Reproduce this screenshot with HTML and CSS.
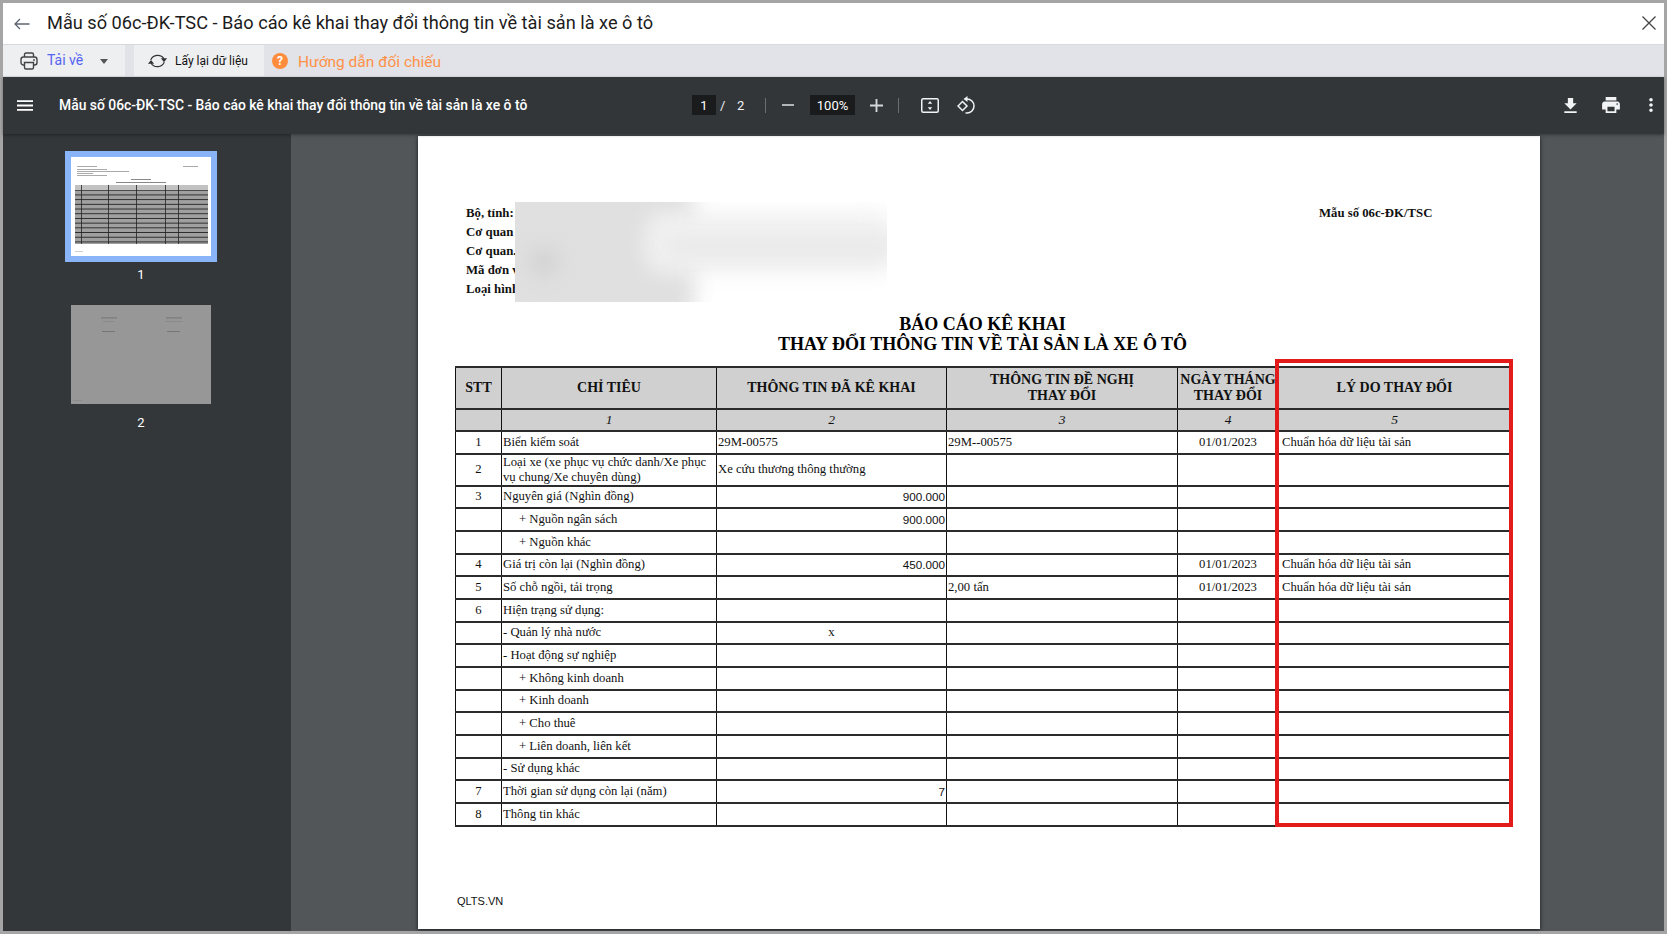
FILE: index.html
```
<!DOCTYPE html>
<html lang="vi">
<head>
<meta charset="utf-8">
<title>Mẫu số 06c-ĐK-TSC</title>
<link rel="stylesheet" href="styles.css">
</head>
<body>
<div class="frame">
  <header class="titlebar">
    <svg class="ic-back" viewBox="0 0 16 12"><path d="M15.5 6H1.2M6 1L1 6l5 5" fill="none" stroke="#5d6673" stroke-width="1.3"/></svg>
    <h1 class="doc-title">Mẫu số 06c-ĐK-TSC - Báo cáo kê khai thay đổi thông tin về tài sản là xe ô tô</h1>
    <svg class="ic-close" viewBox="0 0 14 14"><path d="M.5.5l13 13M13.5.5l-13 13" fill="none" stroke="#444" stroke-width="1.3"/></svg>
  </header>
  <div class="actions">
    <div class="btn btn-download">
      <svg class="ic-printer" viewBox="0 0 18 18"><g fill="none" stroke="#444" stroke-width="1.4"><path d="M4.5 5V2.5q0-1.5 1.5-1.5h6q1.500 0 1.500 1.500V5"/><rect x="1" y="5" width="16" height="8" rx="2.500"/><path d="M4.500 10.500h9v5q0 1.500-1.500 1.500H6q-1.500 0-1.500-1.500z" fill="#eeeff1"/></g><circle cx="14" cy="8" r=".9" fill="#444"/></svg>
      <span class="btn-label">Tải về</span>
      <span class="caret"></span>
    </div>
    <div class="btn btn-refresh">
      <svg class="ic-refresh" viewBox="0 0 18 16"><g fill="none" stroke="#333" stroke-width="1.1"><path d="M3 7A6.500 6 0 0 1 14.750 6"/><path d="M15 9A6.500 6 0 0 1 3.250 10"/></g><path d="M12 5.500h5.500L14.750 9zM.5 10.500H6L3.250 7z" fill="#333"/></svg>
      <span class="btn-text">Lấy lại dữ liệu</span>
    </div>
    <span class="help-dot">?</span>
    <span class="help-text">Hướng dẫn đối chiếu</span>
  </div>
  <div class="pdfbar">
    <svg class="ic-menu" viewBox="3 6 18 12"><path d="M3 18h18v-2H3v2zm0-5h18v-2H3v2zm0-7v2h18V6H3z" fill="#fff"/></svg>
    <span class="pdf-title">Mẫu số 06c-ĐK-TSC - Báo cáo kê khai thay đổi thông tin về tài sản là xe ô tô</span>
    <span class="field field-page">1</span>
    <span class="slash">/</span>
    <span class="total">2</span>
    <span class="sep sep-a"></span>
    <svg class="ic-minus" viewBox="5 11 14 2"><path d="M19 13H5v-2h14v2z" fill="#c9cbcd"/></svg>
    <span class="field field-zoom">100%</span>
    <svg class="ic-plus" viewBox="5 5 14 14"><path d="M19 13h-6v6h-2v-6H5v-2h6V5h2v6h6v2z" fill="#d5d7d9"/></svg>
    <span class="sep sep-b"></span>
    <svg class="ic-fit" viewBox="0 0 18 15"><rect x=".75" y=".75" width="16.500" height="13.500" rx="1.500" fill="none" stroke="#f1f3f4" stroke-width="1.500"/><path d="M9 3l2.200 2.800H6.800zM9 12l2.200-2.800H6.800z" fill="#f1f3f4"/></svg>
    <svg class="ic-rotate" viewBox="0 0 18 18"><g fill="none" stroke="#f1f3f4" stroke-width="1.500"><path d="M5.500 5.500L10 10 5.500 14.500 1 10z"/><path d="M9 3h1a7 7 0 0 1 0 14H8.500"/></g><path d="M10.500 0v6L6.500 3z" fill="#f1f3f4"/></svg>
    <span class="bar-spring"></span>
    <svg class="ic-dl" viewBox="5 3 14 17"><path d="M19 9h-4V3H9v6H5l7 7 7-7zM5 18v2h14v-2H5z" fill="#f1f3f4"/></svg>
    <svg class="ic-print" viewBox="2 3 20 18"><path d="M19 8H5c-1.660 0-3 1.340-3 3v6h4v4h12v-4h4v-6c0-1.660-1.340-3-3-3zm-3 11H8v-5h8v5zm3-7c-.55 0-1-.45-1-1s.45-1 1-1 1 .45 1 1-.45 1-1 1zm-1-9H6v4h12V3z" fill="#f1f3f4"/></svg>
    <svg class="ic-more" viewBox="10 4 4 16"><path d="M12 8c1.100 0 2-.9 2-2s-.9-2-2-2-2 .9-2 2 .9 2 2 2zm0 2c-1.100 0-2 .9-2 2s.9 2 2 2 2-.9 2-2-.9-2-2-2zm0 6c-1.100 0-2 .9-2 2s.9 2 2 2 2-.9 2-2-.9-2-2-2z" fill="#f1f3f4"/></svg>
  </div>
  <div class="workspace">
    <aside class="sidebar">
      <div class="thumb thumb-active">
        <svg class="thumb-page" viewBox="0 0 140 99">
          <defs><pattern id="stripes" width="140" height="4.700" patternUnits="userSpaceOnUse" y="29"><rect width="140" height="3.700" fill="#a0a0a0"/><rect y="3.700" width="140" height="1" fill="#2a2a2a"/></pattern></defs>
          <rect width="140" height="99" fill="#fff"/>
          <g fill="#aaa"><rect x="6" y="9" width="20" height="1"/><rect x="112" y="9" width="15" height="1"/><rect x="6" y="12" width="30" height="1"/><rect x="6" y="14" width="52" height="1"/><rect x="6" y="16" width="16" height="1"/><rect x="6" y="18" width="30" height="1"/><rect x="60" y="22" width="20" height="1" fill="#888"/><rect x="45" y="25" width="50" height="1" fill="#888"/></g>
          <rect x="4" y="28" width="133" height="59" fill="url(#stripes)"/>
          <rect x="4" y="28" width="133" height="5" fill="#c2c2c2"/>
          <g fill="#222"><rect x="10" y="28" width=".8" height="59"/><rect x="37" y="28" width=".8" height="59"/><rect x="65" y="28" width=".8" height="59"/><rect x="94" y="28" width=".8" height="59"/><rect x="107" y="28" width=".8" height="59"/></g>
          <rect x="4" y="94" width="8" height=".7" fill="#bbb"/>
        </svg>
      </div>
      <div class="thumb-num">1</div>
      <div class="thumb">
        <svg class="thumb-page" viewBox="0 0 140 99">
          <rect width="140" height="99" fill="#979797"/>
          <g fill="#6f6f6f"><rect x="30" y="12.500" width="16" height=".8"/><rect x="95" y="12.500" width="16" height=".8"/><rect x="32" y="16" width="11" height=".7" fill="#858585"/><rect x="94" y="16" width="18" height=".7" fill="#858585"/><rect x="31" y="26" width="13" height=".8"/><rect x="96" y="26" width="13" height=".8"/><rect x="2" y="95" width="9" height=".6" fill="#858585"/></g>
        </svg>
      </div>
      <div class="thumb-num">2</div>
    </aside>
    <main class="viewer">
      <article class="page">
        <div class="doc-head">
          <div class="org">
            <div>Bộ, tỉnh:</div>
            <div>Cơ quan</div>
            <div>Cơ quan.</div>
            <div>Mã đơn vị</div>
            <div>Loại hình</div>
          </div>
          <div class="form-no">Mẫu số 06c-ĐK/TSC</div>
        </div>
        <h2 class="report-title">BÁO CÁO KÊ KHAI<br>THAY ĐỔI THÔNG TIN VỀ TÀI SẢN LÀ XE Ô TÔ</h2>
        <table class="report">
          <colgroup><col class="c1"><col class="c2"><col class="c3"><col class="c4"><col class="c5"><col class="c6"></colgroup>
          <thead>
            <tr class="r-head"><th>STT</th><th>CHỈ TIÊU</th><th>THÔNG TIN ĐÃ KÊ KHAI</th><th>THÔNG TIN ĐỀ NGHỊ<br>THAY ĐỔI</th><th>NGÀY THÁNG<br>THAY ĐỔI</th><th>LÝ DO THAY ĐỔI</th></tr>
            <tr class="r-sub"><th></th><th>1</th><th>2</th><th>3</th><th>4</th><th>5</th></tr>
          </thead>
          <tbody>
            <tr class="r"><td class="ctr">1</td><td>Biển kiểm soát</td><td>29M-00575</td><td>29M--00575</td><td class="ctr">01/01/2023</td><td class="why">Chuẩn hóa dữ liệu tài sản</td></tr>
            <tr class="r-tall"><td class="ctr">2</td><td class="tight">Loại xe (xe phục vụ chức danh/Xe phục vụ chung/Xe chuyên dùng)</td><td>Xe cứu thương thông thường</td><td></td><td></td><td></td></tr>
            <tr class="r"><td class="ctr">3</td><td>Nguyên giá (Nghìn đồng)</td><td class="num">900.000</td><td></td><td></td><td></td></tr>
            <tr class="r"><td></td><td class="ind">+ Nguồn ngân sách</td><td class="num">900.000</td><td></td><td></td><td></td></tr>
            <tr class="r"><td></td><td class="ind">+ Nguồn khác</td><td></td><td></td><td></td><td></td></tr>
            <tr class="r"><td class="ctr">4</td><td>Giá trị còn lại (Nghìn đồng)</td><td class="num">450.000</td><td></td><td class="ctr">01/01/2023</td><td class="why">Chuẩn hóa dữ liệu tài sản</td></tr>
            <tr class="r"><td class="ctr">5</td><td>Số chỗ ngồi, tải trọng</td><td></td><td>2,00 tấn</td><td class="ctr">01/01/2023</td><td class="why">Chuẩn hóa dữ liệu tài sản</td></tr>
            <tr class="r"><td class="ctr">6</td><td>Hiện trạng sử dụng:</td><td></td><td></td><td></td><td></td></tr>
            <tr class="r"><td></td><td>- Quản lý nhà nước</td><td class="ctr">x</td><td></td><td></td><td></td></tr>
            <tr class="r"><td></td><td>- Hoạt động sự nghiệp</td><td></td><td></td><td></td><td></td></tr>
            <tr class="r"><td></td><td class="ind">+ Không kinh doanh</td><td></td><td></td><td></td><td></td></tr>
            <tr class="r"><td></td><td class="ind">+ Kinh doanh</td><td></td><td></td><td></td><td></td></tr>
            <tr class="r"><td></td><td class="ind">+ Cho thuê</td><td></td><td></td><td></td><td></td></tr>
            <tr class="r"><td></td><td class="ind">+ Liên doanh, liên kết</td><td></td><td></td><td></td><td></td></tr>
            <tr class="r"><td></td><td>- Sử dụng khác</td><td></td><td></td><td></td><td></td></tr>
            <tr class="r"><td class="ctr">7</td><td>Thời gian sử dụng còn lại (năm)</td><td class="num">7</td><td></td><td></td><td></td></tr>
            <tr class="r"><td class="ctr">8</td><td>Thông tin khác</td><td></td><td></td><td></td><td></td></tr>
          </tbody>
        </table>
        <div class="page-foot">QLTS.VN</div>
        <div class="redact"><i class="b1"></i><i class="b2"></i><i class="b3"></i><i class="b4"></i></div>
        <div class="highlight"></div>
      </article>
    </main>
  </div>
</div>
</body>
</html>
```
FILE: styles.css
```
* { box-sizing: border-box; }
html, body { margin: 0; height: 100%; }
body { background: #a5a5a5; overflow: hidden; font-family: Roboto, "Liberation Sans", sans-serif; }
svg { display: block; flex: none; }

.frame { width: 1667px; height: 934px; padding: 3px; display: flex; flex-direction: column; }

.titlebar { height: 42px; flex: none; background: #fff; border-bottom: 1px solid #d8d9db; display: flex; align-items: center; }
.ic-back { width: 16px; height: 12px; margin-left: 11px; }
.doc-title { margin: -3px 0 0 17px; font-size: 18.200px; font-weight: 400; color: #1c1c1c; white-space: nowrap; flex: 1; }
.ic-close { width: 14px; height: 14px; margin-right: 8px; margin-top: -2px; }

.actions { height: 32px; flex: none; background: #e1e3e8; display: flex; align-items: center; }
.btn { height: 31px; align-self: flex-start; background: #eeeff1; display: flex; align-items: center; }
.btn-download { width: 122px; }
.btn-refresh { width: 130px; margin-left: 9px; }
.ic-printer { width: 18px; height: 18px; margin-left: 17px; }
.btn-label { margin-left: 9px; margin-top: -2px; font-size: 14px; color: #5463f2; }
.caret { margin-left: 17px; margin-top: 2px; border: 4px solid transparent; border-top: 5px solid #555; border-bottom: 0; }
.ic-refresh { width: 21px; height: 18px; margin-left: 13px; margin-top: 1px; }
.btn-text { margin-left: 7px; font-size: 12px; color: #111; white-space: nowrap; }
.help-dot { width: 16px; height: 16px; margin-left: 8px; margin-top: -1px; border-radius: 50%; background: #ff8c3c; color: #fff; font-size: 12px; font-weight: 700; line-height: 16px; text-align: center; }
.help-text { margin-left: 10px; margin-top: 1px; font-size: 15.500px; color: #ff9148; }

.pdfbar { height: 57px; flex: none; background: #323639; color: #f1f3f4; display: flex; align-items: center; position: relative; z-index: 1; box-shadow: 0 1px 3px rgba(0,0,0,.35); padding-bottom: 1px; }
.ic-menu { width: 16px; height: 11px; margin-left: 14px; }
.pdf-title { margin-left: 26px; width: 633px; font-size: 13.900px; font-weight: 500; color: #fff; white-space: nowrap; }
.field { height: 20px; background: #191b1c; color: #fff; font-size: 13px; line-height: 21px; text-align: center; }
.field-page { width: 24px; }
.slash { margin-left: 4px; width: 17px; font-size: 13px; }
.total { width: 28px; font-size: 13px; }
.sep { width: 1px; height: 15px; background: #6b6f72; }
.ic-minus { width: 12px; height: 2px; margin-left: 16px; }
.field-zoom { width: 45px; margin-left: 16px; }
.ic-plus { width: 13px; height: 13px; margin-left: 15px; }
.sep-b { margin-left: 15px; }
.ic-fit { width: 18px; height: 15px; margin-left: 22px; }
.ic-rotate { width: 18px; height: 18px; margin-left: 18px; }
.bar-spring { flex: 1; }
.ic-dl { width: 13px; height: 15px; }
.ic-print { width: 18px; height: 16px; margin-left: 25px; }
.ic-more { width: 4px; height: 14px; margin-left: 29px; margin-right: 11px; }

.workspace { flex: 1; min-height: 0; display: flex; }
.sidebar { width: 288px; flex: none; background: #33373a; padding: 17px 12px 0 0; display: flex; flex-direction: column; align-items: center; }
.thumb { width: 152px; height: 111px; border: 6px solid transparent; }
.thumb-active { border-color: #8ab4f8; }
.thumb-page { width: 140px; height: 99px; }
.thumb-num { height: 37px; padding-top: 2px; font-size: 13px; line-height: 21px; color: #fff; text-align: center; }

.viewer { flex: 1; min-width: 0; background: #525659; padding: 2px 0 0 127px; overflow: hidden; }
.page { position: relative; width: 1122px; height: 793px; background: #fff; padding: 68px 30px 0 37px; box-shadow: 0 1px 4px rgba(0,0,0,.7); font-family: "Liberation Serif", serif; color: #111; }

.doc-head { display: flex; padding-left: 11px; }
.org { width: 853px; font-size: 12.800px; font-weight: 700; line-height: 19px; }
.form-no { font-size: 12.750px; font-weight: 700; line-height: 19px; white-space: nowrap; }

.report-title { margin: 15px 0 12px; font-size: 18px; font-weight: 700; line-height: 20px; text-align: center; color: #000; }

.report { width: 1055px; border-collapse: collapse; table-layout: fixed; font-size: 12.700px; }
.c1 { width: 46px; } .c2 { width: 215px; } .c3 { width: 230px; } .c4 { width: 231px; } .c5 { width: 101px; } .c6 { width: 232px; }
.report th, .report td { border: 1px solid #111; border-top: 2px solid #2b2b2b; border-bottom: 2px solid #2b2b2b; padding: 0 1px; overflow: visible; white-space: nowrap; }
.report th { background: #d0d0d0; text-align: center; }
.r-head { height: 42px; }
.r-head th { font-size: 14px; line-height: 16px; padding: 0; }
.r-sub { height: 22px; }
.r-sub th { font-size: 13.500px; font-weight: 400; font-style: italic; }
.r { height: 22.670px; }
.r-tall { height: 32px; }
.report td.tight { white-space: normal; line-height: 15px; }
.ctr { text-align: center; }
.num { text-align: right; font-family: "Liberation Sans", sans-serif; font-size: 11.700px; }
.report td.num { padding-right: 1px; }
.report td.ind { padding-left: 17px; }
.report td.why { padding-left: 3px; }

.page-foot { margin: 67px 0 0 2px; font-family: "Liberation Sans", sans-serif; font-size: 11px; line-height: 14px; }

.redact { position: absolute; left: 97px; top: 66px; width: 372px; height: 100px; overflow: hidden; background: #fff; }
.redact i { position: absolute; display: block; filter: blur(10px); border-radius: 20px; }
.b1 { left: -30px; top: -20px; width: 210px; height: 140px; background: #e0e0e0; }
.b2 { left: 14px; top: 45px; width: 30px; height: 30px; background: #d2d2d2; }
.b3 { left: 130px; top: 10px; width: 250px; height: 62px; background: #f1f1f1; }
.b4 { left: 150px; top: 38px; width: 240px; height: 14px; background: #e6e6e6; }

.highlight { position: absolute; left: 857px; top: 223px; width: 238px; height: 468px; border: 4px solid #e31b1b; }
```
